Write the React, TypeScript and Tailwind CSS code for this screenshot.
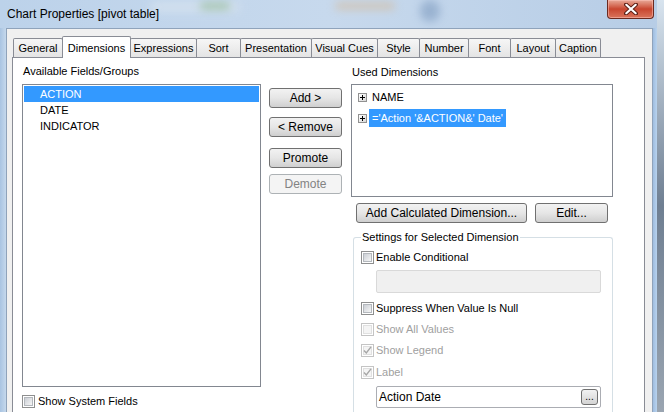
import React from "react";

const tabs = [
  { label: "General", w: "w-[50px]" },
  { label: "Dimensions", w: "w-[69px]", sel: true },
  { label: "Expressions", w: "w-[67px]" },
  { label: "Sort", w: "w-[45px]" },
  { label: "Presentation", w: "w-[72px]" },
  { label: "Visual Cues", w: "w-[67px]" },
  { label: "Style", w: "w-[43px]" },
  { label: "Number", w: "w-[50px]" },
  { label: "Font", w: "w-[43px]" },
  { label: "Layout", w: "w-[46px]" },
  { label: "Caption", w: "w-[46px]" },
];

function Check({ checked = false, disabled = false }: { checked?: boolean; disabled?: boolean }) {
  return (
    <span
      className={`w-[13px] h-[13px] shrink-0 border flex items-center justify-center bg-white ${
        disabled ? "border-[#c4c4c4]" : "border-[#8e8f8f]"
      }`}
    >
      <span
        className={`w-[9px] h-[9px] border flex items-center justify-center ${
          disabled
            ? "border-[#e0e0e0] bg-[#f4f4f4]"
            : "border-[#b4b8bd] bg-gradient-to-br from-[#cbcfd5] to-[#f6f6f6]"
        }`}
      >
        {checked && (
          <svg width="9" height="9" viewBox="0 0 9 9" className="overflow-visible">
            <path d="M1 4.5 L3.3 7 L8 0.8" fill="none" stroke={disabled ? "#a6a6a6" : "#333"} strokeWidth="1.4" />
          </svg>
        )}
      </span>
    </span>
  );
}

function Btn({ children, w, disabled = false }: { children: React.ReactNode; w: string; disabled?: boolean }) {
  return (
    <div
      className={`${w} h-[20px] rounded-[3px] border flex items-center justify-center text-[12px] ${
        disabled
          ? "border-[#adb2b5] bg-[#f4f4f4] text-[#838383]"
          : "border-[#707070] bg-gradient-to-b from-[#f2f2f2] via-[#e6e6e6] to-[#cfcfcf] text-black"
      }`}
    >
      {children}
    </div>
  );
}

function Plus() {
  return (
    <span className="w-[9px] h-[9px] shrink-0 border border-[#919191] bg-gradient-to-br from-white to-[#d8d8d8] flex items-center justify-center">
      <svg width="7" height="7" viewBox="0 0 7 7">
        <path d="M1 3.5 H6 M3.5 1 V6" stroke="#000" strokeWidth="1" />
      </svg>
    </span>
  );
}

export default function App() {
  return (
    <div className="w-[664px] h-[412px] overflow-hidden flex font-['Liberation_Sans',Arial,sans-serif] text-[11px] text-black">
      {/* window */}
      <div className="w-[657px] h-full flex flex-col bg-gradient-to-r from-[#bcd2ea] via-[#c7d9ed] to-[#b7cde6]">
        {/* title bar */}
        <div className="h-[28px] shrink-0 flex items-start relative">
          <div className="absolute left-[150px] top-[2px] w-[90px] h-[10px] rounded-full bg-[#d9e4ef] blur-[4px] opacity-70" />
          <div className="absolute left-[200px] top-[2px] w-[30px] h-[8px] rounded-full bg-[#7fae76] blur-[4px] opacity-50" />
          <div className="absolute left-[335px] top-[2px] w-[60px] h-[8px] rounded-full bg-[#d9b58a] blur-[4px] opacity-50" />
          <div className="absolute left-[420px] top-[0px] w-[20px] h-[22px] rounded-full bg-[#7f9cc0] blur-[4px] opacity-60" />
          <div className="relative h-[28px] flex items-center pl-[7px] text-[12px] text-black">
            Chart Properties [pivot table]
          </div>
          <div className="flex-1" />
          <div className="relative w-[47px] h-[19px] mr-[3px] rounded-b-[4px] border border-t-0 border-[#6b2a20] bg-gradient-to-b from-[#e7a898] via-[#c8452f] to-[#d9735b] flex items-center justify-center shadow-[inset_0_0_0_1px_rgba(255,200,190,0.5)]">
            <svg width="14" height="12" viewBox="0 0 14 12">
              <path d="M2 1.5 L12 10.5 M12 1.5 L2 10.5" stroke="#5a1d14" strokeWidth="4" strokeLinecap="round" />
              <path d="M2.3 1.8 L11.7 10.2 M11.7 1.8 L2.3 10.2" stroke="#ffffff" strokeWidth="2.2" strokeLinecap="round" />
            </svg>
          </div>
        </div>
        {/* body */}
        <div className="flex-1 flex min-h-0">
          <div className="w-[6px] shrink-0 bg-gradient-to-r from-[#a9c4e2] to-[#c5d8ec]" />
          <div className="flex-1 min-w-0 bg-[#f0f0f0] border-l border-t border-r border-[#8fa3bb] flex flex-col pt-[7px] pl-[5px] pr-[7px]">
            {/* tab strip */}
            <div className="h-[21px] shrink-0 flex items-end pl-[1px]">
              {tabs.map((t, i) =>
                t.sel ? (
                  <div
                    key={t.label}
                    className={`${t.w} ${i > 0 ? "-ml-px" : ""} relative z-10 h-[22px] -mb-px border border-b-0 border-[#898c95] bg-white flex items-start justify-center pt-[3px] rounded-t-[2px]`}
                  >
                    {t.label}
                  </div>
                ) : (
                  <div
                    key={t.label}
                    className={`${t.w} ${i > 0 ? "-ml-px" : ""} h-[19px] border border-b-0 border-[#898c95] bg-gradient-to-b from-[#f6f6f6] to-[#e4e4e4] flex items-center justify-center rounded-t-[2px]`}
                  >
                    {t.label}
                  </div>
                )
              )}
            </div>
            {/* panel */}
            <div className="flex-1 min-h-0 border border-b-0 border-[#898c95] bg-white flex pl-[9px]">
              {/* left column */}
              <div className="w-[239px] shrink-0 flex flex-col">
                <div className="h-[26px] flex items-center pl-[1px]">Available Fields/Groups</div>
                <div className="h-[303px] border border-[#828790] bg-white p-[1px] flex flex-col">
                  <div className="h-[16px] bg-[#3399ff] text-white flex items-center pl-[16px]">ACTION</div>
                  <div className="h-[16px] flex items-center pl-[16px]">DATE</div>
                  <div className="h-[16px] flex items-center pl-[16px]">INDICATOR</div>
                </div>
                <div className="mt-[7px] h-[15px] flex items-center gap-[3px]">
                  <Check />
                  <span>Show System Fields</span>
                </div>
              </div>
              {/* buttons column */}
              <div className="w-[73px] ml-[8px] shrink-0 flex flex-col pt-[30px]">
                <Btn w="w-[73px]">Add &gt;</Btn>
                <div className="h-[9px]" />
                <Btn w="w-[73px]">&lt; Remove</Btn>
                <div className="h-[11px]" />
                <Btn w="w-[73px]">Promote</Btn>
                <div className="h-[6px]" />
                <Btn w="w-[73px]" disabled>
                  Demote
                </Btn>
              </div>
              {/* right column */}
              <div className="w-[262px] ml-[9px] shrink-0 flex flex-col">
                <div className="h-[26px] flex items-center pl-[1px] pt-[2px]">Used Dimensions</div>
                <div className="h-[113px] border border-[#828790] bg-white flex flex-col pt-[3px] pl-[6px] gap-[3px]">
                  <div className="h-[18px] flex items-center">
                    <Plus />
                    <span className="ml-[2px] pl-[3px] pr-[3px] h-[18px] flex items-center">NAME</span>
                  </div>
                  <div className="h-[18px] flex items-center">
                    <Plus />
                    <span className="ml-[2px] pl-[3px] pr-[3px] h-[18px] flex items-center bg-[#3399ff] text-white">
                      ='Action '&amp;ACTION&amp;' Date'
                    </span>
                  </div>
                </div>
                <div className="mt-[6px] flex pl-[5px]">
                  <Btn w="w-[171px]">Add Calculated Dimension...</Btn>
                  <div className="w-[8px]" />
                  <Btn w="w-[73px]">Edit...</Btn>
                </div>
                <fieldset className="mt-[8px] ml-[2px] w-[260px] flex-1 border border-b-0 border-[#d5dfe5] rounded-t-[3px] pl-[7px] pr-[11px] flex flex-col">
                  <legend className="px-[1px] leading-[13px]">Settings for Selected Dimension</legend>
                  <div className="mt-[6px] h-[15px] flex items-center gap-[2px]">
                    <Check />
                    <span>Enable Conditional</span>
                  </div>
                  <div className="mt-[5px] ml-[15px] h-[23px] rounded-[2px] border border-[#d9d9d9] bg-[#f0f0f0]" />
                  <div className="mt-[8px] h-[15px] flex items-center gap-[2px]">
                    <Check />
                    <span>Suppress When Value Is Null</span>
                  </div>
                  <div className="mt-[6px] h-[15px] flex items-center gap-[2px] text-[#a0a0a0]">
                    <Check disabled />
                    <span>Show All Values</span>
                  </div>
                  <div className="mt-[6px] h-[15px] flex items-center gap-[2px] text-[#a0a0a0]">
                    <Check disabled checked />
                    <span>Show Legend</span>
                  </div>
                  <div className="mt-[7px] h-[15px] flex items-center gap-[2px] text-[#a0a0a0]">
                    <Check disabled checked />
                    <span>Label</span>
                  </div>
                  <div className="mt-[6px] ml-[15px] h-[22px] rounded-[2px] border border-[#abadb3] bg-white flex items-center pl-[2px] pr-[2px] text-[12px]">
                    <span className="flex-1">Action Date</span>
                    <div className="w-[17px] h-[16px] rounded-[3px] border border-[#707070] bg-gradient-to-b from-[#f2f2f2] to-[#d4d4d4] flex items-end justify-center leading-[10px] text-[10px] pb-[2px]">
                      ...
                    </div>
                  </div>
                </fieldset>
              </div>
            </div>
          </div>
          <div className="w-[4px] shrink-0 bg-gradient-to-r from-[#9fbde0] to-[#b9d3ee]" />
        </div>
      </div>
      {/* desktop strip */}
      <div className="flex-1 h-full bg-gradient-to-b from-[#d8e4ef] via-[#6f7f92] to-[#9aa5b1]" />
    </div>
  );
}
